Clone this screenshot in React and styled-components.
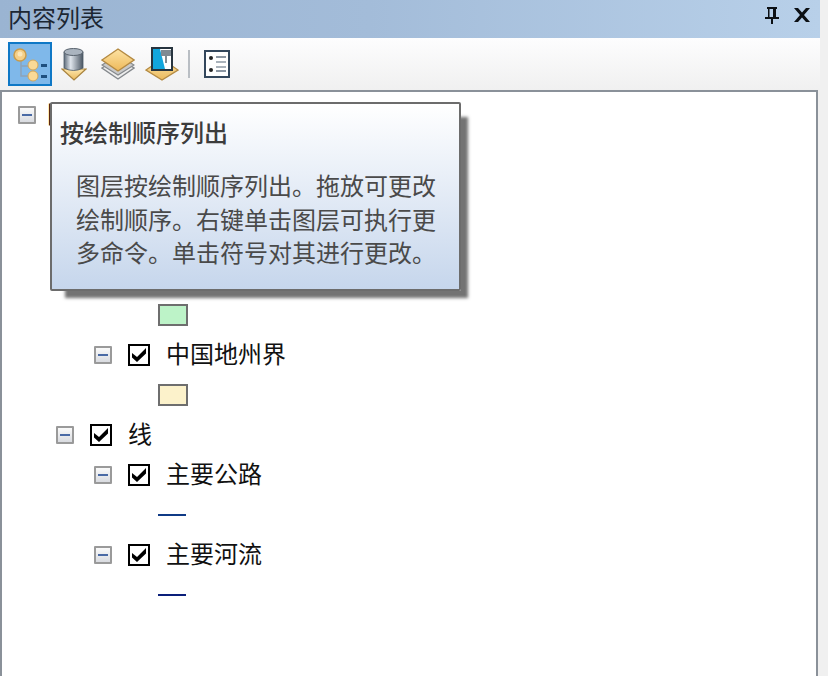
import React from 'react'
import styled, { createGlobalStyle } from 'styled-components'

const GlobalStyle = createGlobalStyle`
html, body {
    margin: 0;
    padding: 0;
    height: 100%;
    overflow: hidden;
    background: #f0f0f0;
}
#root {
    height: 100%;
}
`

const Panel = styled.div`
width: 820px;
height: 676px;
display: flex;
flex-direction: column;
position: relative;
font-family: "Noto Sans CJK SC", "Noto Sans", sans-serif;
`

const TitleBar = styled.div`
height: 38px;
flex-shrink: 0;
display: flex;
align-items: center;
padding: 0 10px 0 8px;
box-sizing: border-box;
background: linear-gradient(90deg, #9ab4d2 0%, #a3bcd9 45%, #b8d0e9 100%);
`

const Title = styled.span`
flex: 1;
font-size: 24px;
line-height: 36px;
padding-bottom: 4px;
color: #1c2733;
`

const TitleIcon = styled.svg`
display: block;
margin-left: ${(props) => props.$gap || 0}px;
margin-bottom: 8px;
`

const Toolbar = styled.div`
height: 52px;
flex-shrink: 0;
display: flex;
align-items: center;
padding: 0 0 0 8px;
box-sizing: border-box;
background: linear-gradient(180deg, #fdfdfe 0%, #f0f0f0 100%);
`

const ToolButton = styled.div`
width: 44px;
height: 44px;
box-sizing: border-box;
display: flex;
align-items: center;
justify-content: center;
border: 2px solid ${(props) => (props.$active ? '#0f78c6' : 'transparent')};
background: ${(props) => (props.$active ? '#7fb8ea' : 'transparent')};
`

const ToolSeparator = styled.div`
width: 2px;
height: 28px;
margin: 0 5px 0 4px;
background: #b9bec4;
`

const Tree = styled.div`
flex: 1;
margin-right: 2px;
padding-top: 3px;
box-sizing: border-box;
background: #fff;
border: 2px solid #8a9199;
border-bottom: none;
`

const Row = styled.div`
height: 40px;
display: flex;
align-items: center;
padding-left: ${(props) => props.$indent}px;
`

const Covered = styled.div`
height: 160px;
`

const Toggle = styled.div`
width: 18px;
height: 18px;
box-sizing: border-box;
flex-shrink: 0;
display: flex;
align-items: center;
justify-content: center;
border: 2px solid #9a9a9a;
border-radius: 1px;
background: linear-gradient(180deg, #fafafa 0%, #d9dbe0 100%);

&::after {
    content: "";
    width: 10px;
    height: 2px;
    background: #4a6aa5;
}
`

const Check = styled.svg`
display: block;
flex-shrink: 0;
margin-left: 16px;
`

const Label = styled.span`
margin-left: ${(props) => props.$gap}px;
padding-bottom: 5px;
font-size: 24px;
line-height: 32px;
color: #111;
white-space: nowrap;
`

const Swatch = styled.div`
width: 30px;
height: 22px;
box-sizing: border-box;
border: 2px solid #6e6e6e;
background: ${(props) => props.color};
`

const LineSymbol = styled.div`
width: 28px;
height: 2px;
background: ${(props) => props.color};
`

const Tooltip = styled.div`
position: absolute;
left: 50px;
top: 102px;
width: 411px;
height: 189px;
box-sizing: border-box;
padding: 11px 8px 0 8px;
border: 2px solid #6c6c6c;
border-radius: 2px;
background: linear-gradient(180deg, #ffffff 0%, #c6d6ec 100%);
box-shadow: 11px 11px 3px -4px rgba(80, 80, 80, 0.8);
color: #4a4a4a;
`

const TooltipTitle = styled.div`
font-size: 24px;
line-height: 34px;
font-weight: 500;
color: #3c3c3c;
`

const TooltipBody = styled.div`
width: 360px;
margin: 19px 0 0 16px;
font-size: 24px;
line-height: 33.5px;
`

const CheckBox = () => (
    <Check width="22" height="22" viewBox="0 0 22 22">
        <rect x="1" y="1" width="20" height="20" fill="#fff" stroke="#000" strokeWidth="2" />
        <path d="M4 9 L9 13 L18 4 V9.5 L9 18 L4 13.5 Z" fill="#000" />
    </Check>
)

const DrawOrderIcon = () => (
    <svg width="36" height="36" viewBox="0 0 36 36">
        <path d="M9 14 V30 H19 M9 20 H19" fill="none" stroke="#8fa3b8" strokeWidth="1.5" />
        <circle cx="8" cy="9" r="6" fill="#f5cf87" stroke="#c99b4a" strokeWidth="1.5" />
        <circle cx="8" cy="8" r="2.5" fill="#fbe6b8" />
        <circle cx="21" cy="19" r="5" fill="#fad996" stroke="#d3a75a" strokeWidth="1" />
        <circle cx="21" cy="30" r="5" fill="#fad996" stroke="#d3a75a" strokeWidth="1" />
        <rect x="29" y="18" width="6" height="3" fill="#1f4f7f" />
        <rect x="29" y="29" width="6" height="3" fill="#1f4f7f" />
    </svg>
)

const SourceIcon = () => (
    <svg width="26" height="34" viewBox="0 0 26 34">
        <defs>
            <linearGradient id="can" x1="0" x2="1" y1="0" y2="0">
                <stop offset="0" stopColor="#5d6b7a" />
                <stop offset="0.35" stopColor="#dfe5ec" />
                <stop offset="1" stopColor="#4a5663" />
            </linearGradient>
            <linearGradient id="goldA" x1="0" x2="0" y1="0" y2="1">
                <stop offset="0" stopColor="#fde7ae" />
                <stop offset="1" stopColor="#eab95c" />
            </linearGradient>
        </defs>
        <path d="M1 22 H25 L13 33 Z" fill="url(#goldA)" stroke="#a9843f" strokeWidth="1.2" />
        <path d="M3 5 V21 Q12.5 26 22 21 V5 Z" fill="url(#can)" stroke="#4d5a67" strokeWidth="0.8" />
        <ellipse cx="12.5" cy="5" rx="9.5" ry="3.5" fill="#aab4bf" stroke="#59636e" strokeWidth="1" />
    </svg>
)

const VisibilityIcon = () => (
    <svg width="34" height="34" viewBox="0 0 34 34">
        <defs>
            <linearGradient id="goldB" x1="0" x2="0" y1="0" y2="1">
                <stop offset="0" stopColor="#fde3a4" />
                <stop offset="1" stopColor="#eeb95a" />
            </linearGradient>
        </defs>
        <path d="M1 21 L17 11 L33 21 L17 32 Z" fill="#eeeeee" stroke="#85898d" strokeWidth="1.4" />
        <path d="M1 18 L17 8 L33 18 L17 28 Z" fill="#c9c9c9" stroke="#85898d" strokeWidth="1.2" />
        <path d="M1 13 L17 2 L33 13 L17 24 Z" fill="url(#goldB)" stroke="#b48a42" strokeWidth="1.4" />
    </svg>
)

const SelectionIcon = () => (
    <svg width="34" height="34" viewBox="0 0 34 34">
        <defs>
            <linearGradient id="goldC" x1="0" x2="0" y1="0" y2="1">
                <stop offset="0" stopColor="#fde7ae" />
                <stop offset="1" stopColor="#eab95c" />
            </linearGradient>
        </defs>
        <path d="M1 23 L17 12 L33 23 L17 33 Z" fill="url(#goldC)" stroke="#b48a42" strokeWidth="1.3" />
        <rect x="7" y="1" width="20" height="22" fill="#fff" stroke="#27343f" strokeWidth="2" />
        <path d="M8 2 H15 L20 22 H8 Z" fill="#12a6dd" />
        <path d="M16 3 H26 V9 H22 V16 H20 V9 H16 Z" fill="#7f8a93" />
    </svg>
)

const OptionsIcon = () => (
    <svg width="26" height="28" viewBox="0 0 26 28">
        <rect x="1" y="1" width="24" height="26" fill="#fff" stroke="#33475c" strokeWidth="2" />
        <circle cx="7" cy="8" r="2" fill="#222" />
        <circle cx="7" cy="20" r="2" fill="#222" />
        <rect x="12" y="6" width="10" height="2" fill="#8b96a2" />
        <rect x="12" y="11" width="10" height="2" fill="#a9b2bb" />
        <rect x="12" y="16" width="10" height="2" fill="#a9b2bb" />
        <rect x="12" y="20" width="10" height="2" fill="#8b96a2" />
    </svg>
)

const App = () => {
    return (
        <Panel>
            <GlobalStyle />
            <TitleBar>
                <Title>内容列表</Title>
                <TitleIcon width="14" height="17" viewBox="0 0 14 17">
                    <path d="M2 0 H12 V2 H11 V10 H14 V12 H8 V17 H6 V12 H0 V10 H3 V2 H2 Z M4.5 2 V10 H8 V2 Z" fill="#0c1014" fillRule="evenodd" />
                </TitleIcon>
                <TitleIcon $gap={15} width="16" height="14" viewBox="0 0 16 14">
                    <path d="M0 0 H4 L8 4.5 L12 0 H16 L10 7 L16 14 H12 L8 9.5 L4 14 H0 L6 7 Z" fill="#0c1014" />
                </TitleIcon>
            </TitleBar>

            <Toolbar>
                <ToolButton $active><DrawOrderIcon /></ToolButton>
                <ToolButton><SourceIcon /></ToolButton>
                <ToolButton><VisibilityIcon /></ToolButton>
                <ToolButton><SelectionIcon /></ToolButton>
                <ToolSeparator />
                <ToolButton><OptionsIcon /></ToolButton>
            </Toolbar>

            <Tree>
                <Row $indent={16}>
                    <Toggle />
                    <Label $gap={11}>图层</Label>
                </Row>
                <Covered />
                <Row $indent={156}><Swatch color="#bdf3c8" /></Row>
                <Row $indent={92}>
                    <Toggle />
                    <CheckBox />
                    <Label $gap={16}>中国地州界</Label>
                </Row>
                <Row $indent={156}><Swatch color="#fcf2cb" /></Row>
                <Row $indent={54}>
                    <Toggle />
                    <CheckBox />
                    <Label $gap={16}>线</Label>
                </Row>
                <Row $indent={92}>
                    <Toggle />
                    <CheckBox />
                    <Label $gap={16}>主要公路</Label>
                </Row>
                <Row $indent={156}><LineSymbol color="#0f3a86" /></Row>
                <Row $indent={92}>
                    <Toggle />
                    <CheckBox />
                    <Label $gap={16}>主要河流</Label>
                </Row>
                <Row $indent={156}><LineSymbol color="#0a1f7a" /></Row>
            </Tree>

            <Tooltip>
                <TooltipTitle>按绘制顺序列出</TooltipTitle>
                <TooltipBody>图层按绘制顺序列出。拖放可更改绘制顺序。右键单击图层可执行更多命令。单击符号对其进行更改。</TooltipBody>
            </Tooltip>
        </Panel>
    )
}

export default App
